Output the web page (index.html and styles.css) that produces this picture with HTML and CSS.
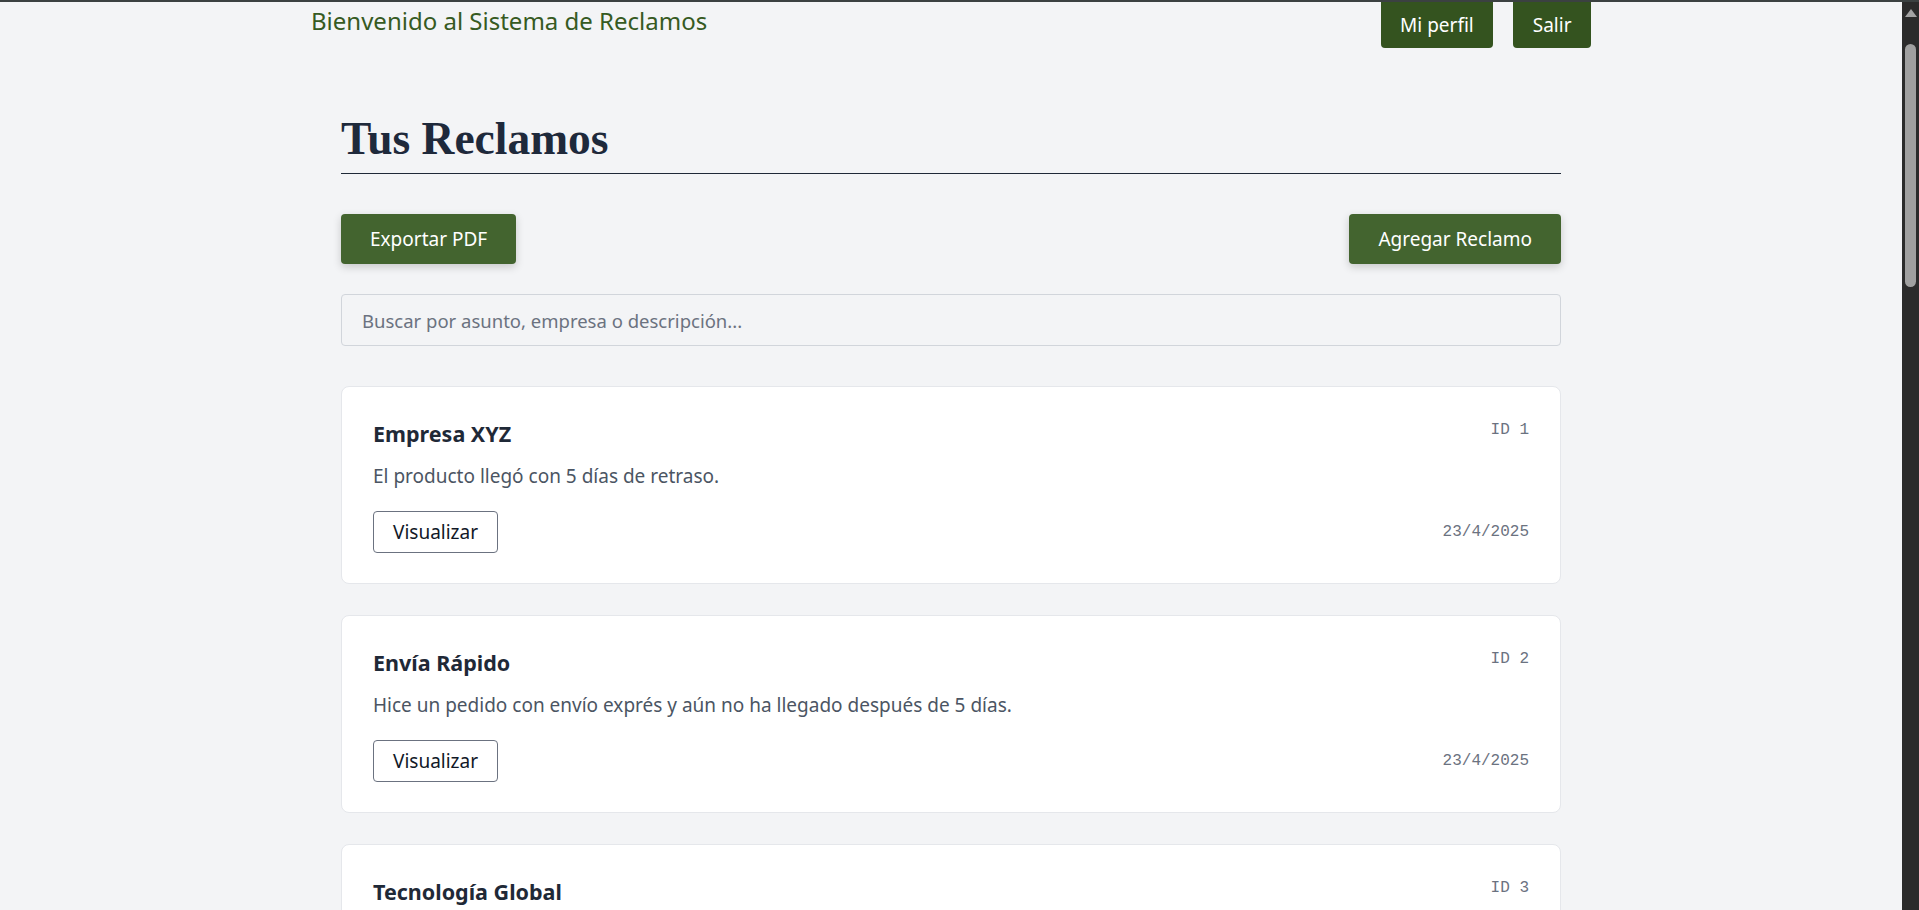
FILE: index.html
```html
<!DOCTYPE html>
<html lang="es">
<head>
<meta charset="utf-8">
<title>Sistema de Reclamos</title>
<link rel="stylesheet" href="styles.css">
</head>
<body>
<div class="topline"></div>
<div class="frame">
  <div class="app">
    <header class="header">
      <h2 class="welcome">Bienvenido al Sistema de Reclamos</h2>
      <nav class="header-actions">
        <button class="btn-nav">Mi perfil</button>
        <button class="btn-nav">Salir</button>
      </nav>
    </header>
    <main class="main">
      <h1 class="page-title">Tus Reclamos</h1>
      <div class="toolbar">
        <button class="btn-primary">Exportar PDF</button>
        <button class="btn-primary">Agregar Reclamo</button>
      </div>
      <input class="search" type="text" placeholder="Buscar por asunto, empresa o descripción...">
      <section class="list">
        <article class="card">
          <div class="card-head"><h3 class="card-title">Empresa XYZ</h3><span class="mono">ID 1</span></div>
          <p class="card-desc">El producto llegó con 5 días de retraso.</p>
          <div class="card-foot"><button class="btn-outline">Visualizar</button><span class="mono">23/4/2025</span></div>
        </article>
        <article class="card">
          <div class="card-head"><h3 class="card-title">Envía Rápido</h3><span class="mono">ID 2</span></div>
          <p class="card-desc">Hice un pedido con envío exprés y aún no ha llegado después de 5 días.</p>
          <div class="card-foot"><button class="btn-outline">Visualizar</button><span class="mono">23/4/2025</span></div>
        </article>
        <article class="card">
          <div class="card-head"><h3 class="card-title">Tecnología Global</h3><span class="mono">ID 3</span></div>
        </article>
      </section>
    </main>
  </div>
  <div class="scrollbar" aria-hidden="true">
    <svg class="scroll-arrow" width="12" height="8" viewBox="0 0 12 8"><polygon points="6,0 12,8 0,8" fill="#a3a3a3"/></svg>
    <div class="scroll-thumb"></div>
  </div>
</div>
</body>
</html>
```
FILE: styles.css
```css
html, body {
  margin: 0;
  padding: 0;
  height: 100%;
  overflow: hidden;
}
body {
  background: #f3f4f6;
  font-family: "Noto Sans", "Open Sans", sans-serif;
  color: #1f2937;
}
.topline {
  height: 2px;
  background: #3b4141;
}
.frame {
  display: flex;
  height: calc(100vh - 2px);
}
.app {
  flex: 1;
  min-width: 0;
  overflow: hidden;
}
.scrollbar {
  width: 17px;
  flex: none;
  background: #2b2b2b;
  display: flex;
  flex-direction: column;
  align-items: center;
  padding-top: 7px;
  box-sizing: border-box;
}
.scroll-arrow {
  display: block;
}
.scroll-thumb {
  width: 11px;
  height: 243px;
  margin-top: 27px;
  border-radius: 6px;
  background: #a0a0a0;
}
.header {
  max-width: 1280px;
  margin: 0 auto;
  display: flex;
  justify-content: space-between;
  align-items: flex-start;
}
.welcome {
  margin: 0;
  padding-top: 2px;
  font-size: 24px;
  font-weight: 400;
  color: #365a22;
  line-height: 34px;
}
.header-actions {
  display: flex;
  gap: 20px;
}
.btn-nav {
  height: 46px;
  padding: 0 19.5px;
  border: none;
  border-radius: 0 0 4px 4px;
  background: #34531f;
  color: #ffffff;
  font-family: inherit;
  font-size: 19px;
}
.main {
  max-width: 1220px;
  margin: 0 auto;
  padding: 63px 0 40px;
}
.page-title {
  margin: 0;
  padding-bottom: 6px;
  font-family: "Liberation Serif", "Times New Roman", serif;
  font-size: 45.5px;
  font-weight: 700;
  line-height: 56px;
  color: #1e293b;
  border-bottom: 1px solid #1f2937;
}
.toolbar {
  display: flex;
  justify-content: space-between;
  margin-top: 40px;
}
.btn-primary {
  height: 50px;
  padding: 0 29px;
  border: none;
  border-radius: 4px;
  background: #43642f;
  color: #ffffff;
  font-family: inherit;
  font-size: 19px;
  box-shadow: 0 3px 8px rgba(0, 0, 0, 0.18);
}
.search {
  display: block;
  box-sizing: border-box;
  width: 100%;
  height: 52px;
  margin-top: 30px;
  padding: 0 20px;
  border: 1px solid #d1d5db;
  border-radius: 4px;
  background: #f3f4f6;
  font-family: inherit;
  font-size: 18.5px;
  color: #1f2937;
}
.search::placeholder {
  color: #6b7280;
}
.list {
  display: flex;
  flex-direction: column;
  gap: 31px;
  margin-top: 40px;
}
.card {
  background: #ffffff;
  border: 1px solid #e5e7eb;
  border-radius: 8px;
  padding: 32px 31px 30px;
}
.card-head {
  display: flex;
  justify-content: space-between;
  align-items: flex-start;
}
.card-title {
  margin: 0;
  font-size: 21.5px;
  font-weight: 700;
  line-height: 30px;
  color: #1f2937;
}
.card-head .mono {
  padding-top: 2px;
}
.mono {
  font-family: "Liberation Mono", "Courier New", monospace;
  font-size: 16px;
  color: #6b7280;
}
.card-desc {
  margin: 14px 0 22px;
  font-size: 19px;
  line-height: 26px;
  color: #4b5563;
}
.card-foot {
  display: flex;
  justify-content: space-between;
  align-items: center;
}
.btn-outline {
  height: 42px;
  padding: 0 19px;
  border: 1px solid #6b7280;
  border-radius: 4px;
  background: #ffffff;
  color: #111827;
  font-family: inherit;
  font-size: 19px;
}
```
